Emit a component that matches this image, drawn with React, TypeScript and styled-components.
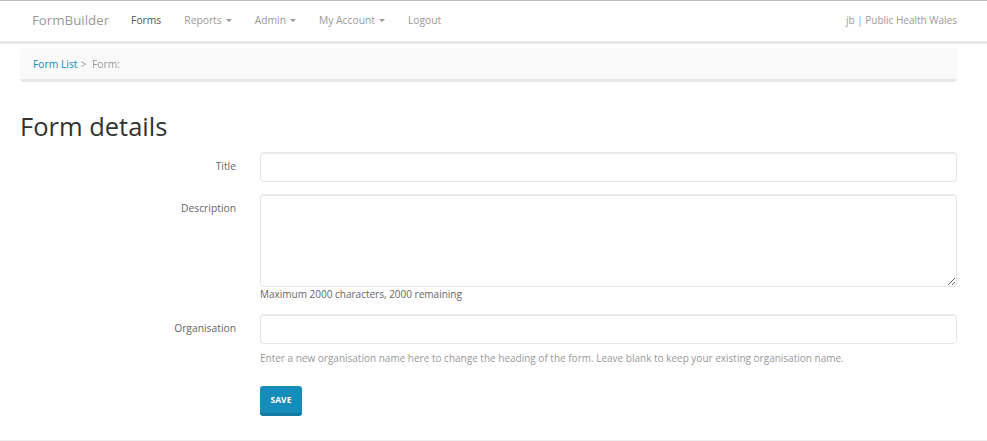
import React from 'react';
import styled, { createGlobalStyle } from 'styled-components';

const GlobalStyle = createGlobalStyle`
  html, body {
    margin: 0;
    padding: 0;
    background: #fff;
    font-family: "Open Sans", "Liberation Sans", sans-serif;
    font-size: 10.5px;
    color: #555;
  }
  * { box-sizing: border-box; }
`;

const Page = styled.div`
  border-top: 1px solid #bbb;
  min-height: 441px;
  display: flex;
  flex-direction: column;
`;

const Navbar = styled.nav`
  height: 43px;
  border-bottom: 3px solid #e7e7e7;
  display: flex;
  align-items: center;
  padding: 0 30px 0 32px;
`;

const Brand = styled.span`
  font-size: 13.3px;
  color: #999;
  margin-right: 22px;
  margin-top: -3px;
`;

const NavItem = styled.span<{ $active?: boolean }>`
  font-size: 10.3px;
  color: ${p => (p.$active ? '#555' : '#999')};
  margin-right: 23px;
  margin-top: -3px;
  display: flex;
  align-items: center;
  gap: 4px;
`;

const Caret = styled.span`
  display: inline-block;
  width: 0;
  height: 0;
  border-left: 3.5px solid transparent;
  border-right: 3.5px solid transparent;
  border-top: 3.5px solid #999;
  margin-top: 1px;
`;

const NavRight = styled.span`
  margin-left: auto;
  font-size: 10px;
  color: #999;
  margin-top: -3px;
`;

const Container = styled.div`
  padding: 0 30px 0 20px;
  flex: 1;
`;

const Breadcrumb = styled.div`
  margin-top: 4px;
  height: 34px;
  background: #f9f9f9;
  border-radius: 4px;
  border-bottom: 3px solid #e7e7e7;
  display: flex;
  align-items: center;
  padding: 0 13px;
  font-size: 10.3px;
  color: #999;
  gap: 3px;
`;

const Crumb = styled.a`
  color: #158cba;
  text-decoration: none;
`;

const Heading = styled.h1`
  font-size: 25.5px;
  font-weight: 400;
  color: #333;
  margin: 26px 0 0 0;
  line-height: 36px;
`;

const FormGrid = styled.div`
  display: grid;
  grid-template-columns: 216px 1fr;
  column-gap: 24px;
  align-items: start;
  margin-top: 8px;
`;

const Label = styled.label`
  text-align: right;
  font-size: 10.3px;
  color: #666;
  padding-top: 7px;
`;

const Field = styled.div<{ $gap?: number }>`
  display: flex;
  flex-direction: column;
  margin-bottom: ${p => p.$gap ?? 12}px;
`;

const Input = styled.input`
  height: 30px;
  width: 100%;
  border: 1px solid #e7e7e7;
  border-top: 2px solid #eaeaea;
  border-radius: 4px;
  background: #fff;
  outline: none;
`;

const TextArea = styled.textarea`
  height: 93px;
  width: 100%;
  border: 1px solid #e7e7e7;
  border-top: 2px solid #eaeaea;
  border-radius: 4px;
  background: #fff;
  outline: none;
`;

const Help = styled.span<{ $dark?: boolean }>`
  font-size: 10px;
  color: ${p => (p.$dark ? '#666' : '#999')};
  margin-top: ${p => (p.$dark ? 0 : 7)}px;
`;

const SaveButton = styled.button`
  width: 42px;
  height: 30px;
  background: #158cba;
  border: none;
  border-bottom: 3px solid #127ba3;
  border-radius: 3px;
  color: #fff;
  font-family: "Open Sans", "Liberation Sans", sans-serif;
  font-size: 8.5px;
  font-weight: 700;
  padding: 0;
  margin-top: 21px;
`;

const Footer = styled.div`
  border-top: 1px solid #eee;
  margin-top: 17px;
`;

export default function App() {
  return (
    <>
      <GlobalStyle />
      <Page>
        <Navbar>
          <Brand>FormBuilder</Brand>
          <NavItem $active>Forms</NavItem>
          <NavItem>Reports <Caret /></NavItem>
          <NavItem>Admin <Caret /></NavItem>
          <NavItem>My Account <Caret /></NavItem>
          <NavItem>Logout</NavItem>
          <NavRight>jb | Public Health Wales</NavRight>
        </Navbar>
        <Container>
          <Breadcrumb>
            <Crumb href="#">Form List</Crumb>
            <span>&gt;</span>
            <span>&nbsp;Form:</span>
          </Breadcrumb>
          <Heading>Form details</Heading>
          <FormGrid>
            <Label>Title</Label>
            <Field>
              <Input />
            </Field>
            <Label>Description</Label>
            <Field $gap={13}>
              <TextArea />
              <Help $dark>Maximum 2000 characters, 2000 remaining</Help>
            </Field>
            <Label>Organisation</Label>
            <Field $gap={0}>
              <Input />
              <Help>Enter a new organisation name here to change the heading of the form. Leave blank to keep your existing organisation name.</Help>
            </Field>
            <span />
            <div>
              <SaveButton>SAVE</SaveButton>
            </div>
          </FormGrid>
        </Container>
        <Footer />
      </Page>
    </>
  );
}
